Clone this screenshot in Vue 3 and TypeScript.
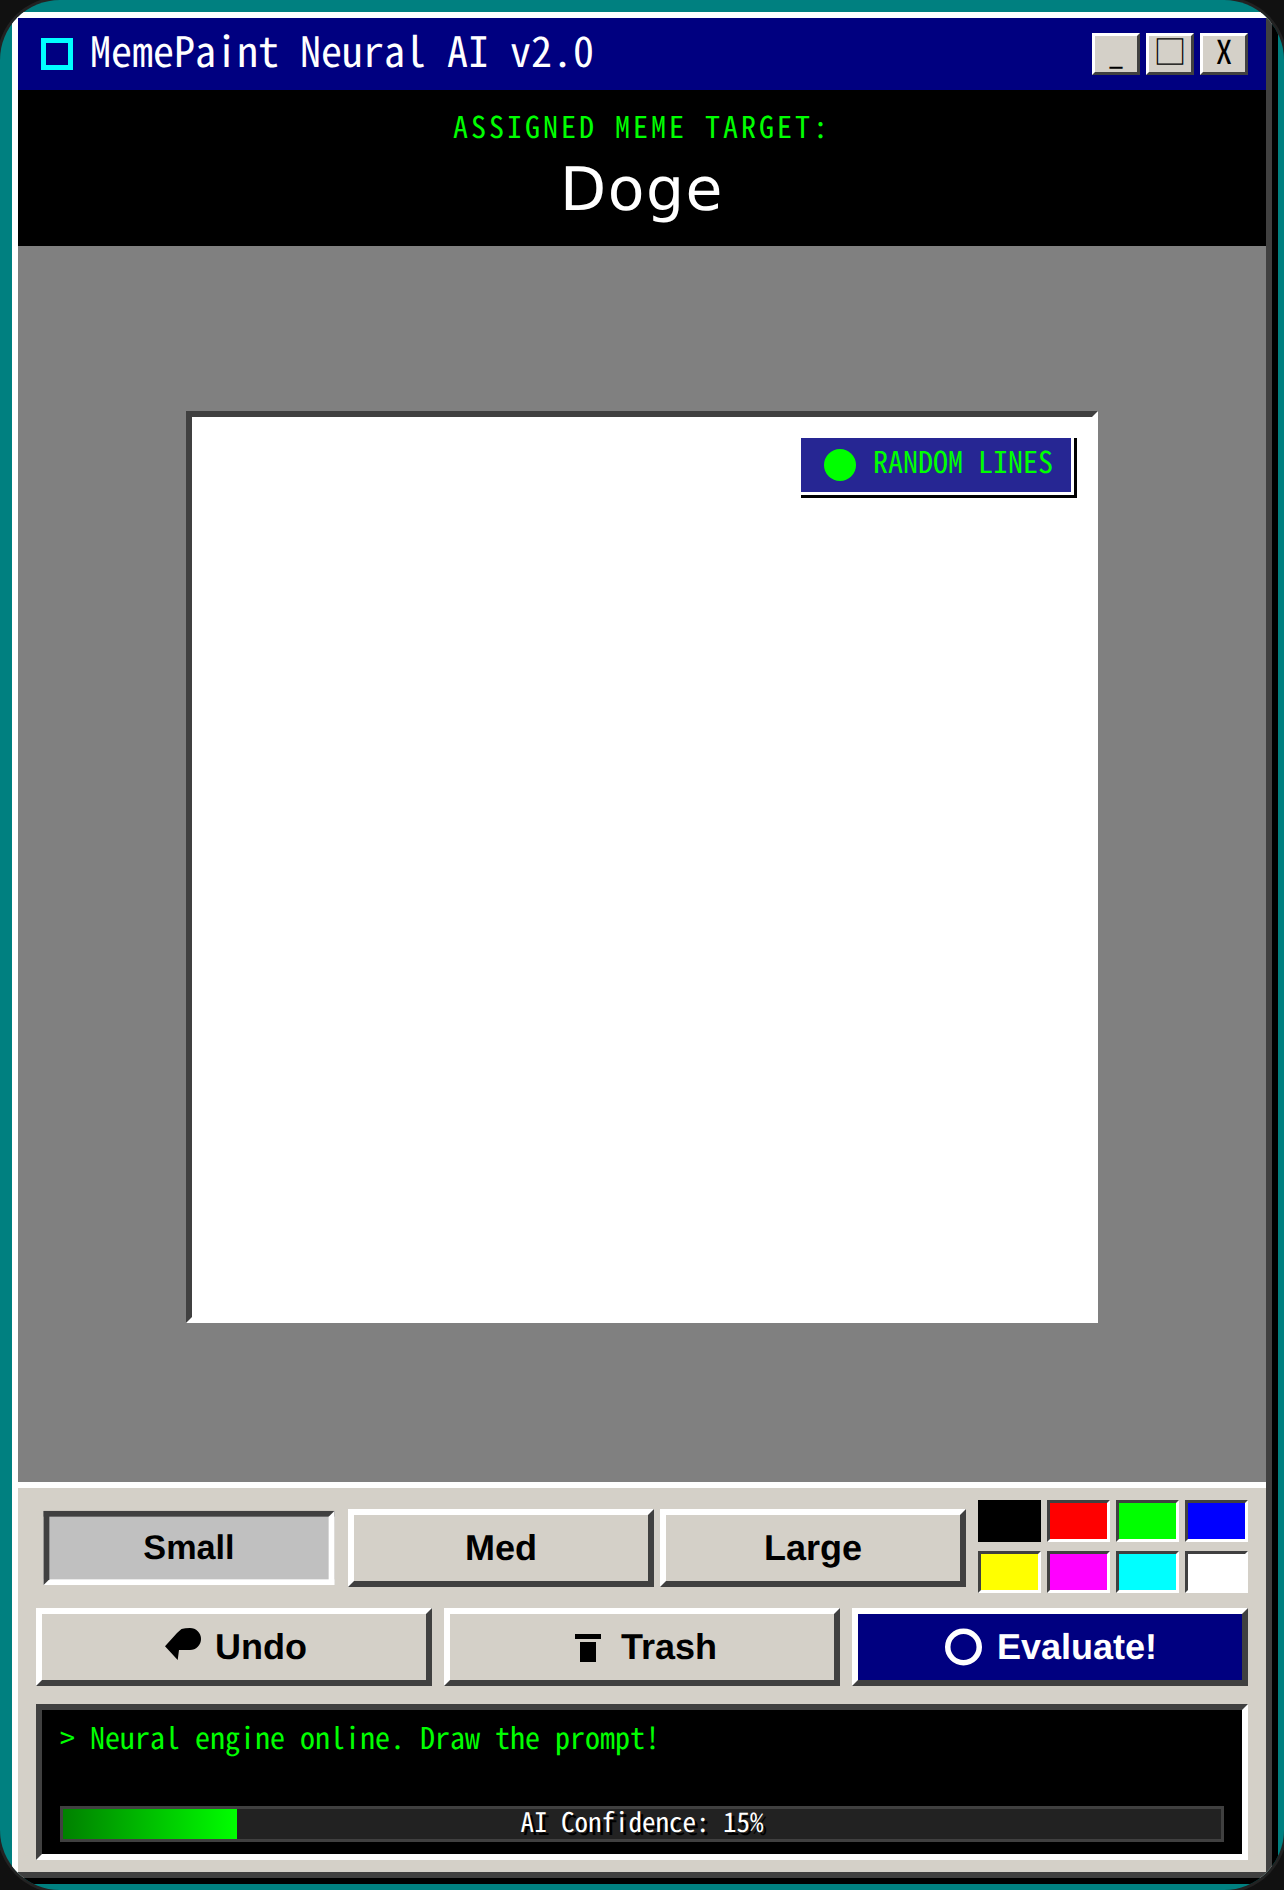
<script setup lang="ts">
import { ref } from 'vue';

const sizes = ['Small', 'Med', 'Large'];
const activeSize = ref('Small');
const colors = ['#000000', '#ff0000', '#00ff00', '#0000ff', '#ffff00', '#ff00ff', '#00ffff', '#ffffff'];
const activeColor = ref('#000000');
const confidence = ref(15);
</script>

<template>
  <div class="frame">
    <div class="window">
      <div class="title-bar">
        <div class="title">
          <span class="title-icon"></span>
          <span class="title-text">MemePaint Neural AI v2.0</span>
        </div>
        <div class="title-buttons">
          <button class="win-btn">_</button>
          <button class="win-btn">□</button>
          <button class="win-btn">X</button>
        </div>
      </div>

      <div class="prompt">
        <div class="prompt-label">ASSIGNED MEME TARGET:</div>
        <div class="prompt-word">Doge</div>
      </div>

      <div class="stage">
        <div class="canvas">
          <div class="badge">
            <span class="badge-dot"></span>
            <span class="badge-text">RANDOM LINES</span>
          </div>
        </div>
      </div>

      <div class="controls">
        <div class="row-top">
          <div class="sizes">
            <button
              v-for="s in sizes"
              :key="s"
              class="btn"
              :class="{ pressed: s === activeSize }"
              @click="activeSize = s"
            >{{ s }}</button>
          </div>
          <div class="swatches">
            <button
              v-for="c in colors"
              :key="c"
              class="swatch"
              :class="{ selected: c === activeColor }"
              :style="{ backgroundColor: c }"
              @click="activeColor = c"
            ></button>
          </div>
        </div>

        <div class="row-actions">
          <button class="btn">
            <svg class="icon" viewBox="0 0 42 42" fill="currentColor">
              <path d="M4 20.3 16 7 20.5 3Q24 2 29 2a11 11 0 0 1 0 22H18L16.7 34Z" />
            </svg>
            Undo
          </button>
          <button class="btn">
            <svg class="icon" viewBox="0 0 42 42" fill="currentColor">
              <rect x="8" y="8" width="26" height="5" />
              <rect x="13" y="16" width="16" height="20" />
            </svg>
            Trash
          </button>
          <button class="btn primary">
            <svg class="icon" viewBox="0 0 42 42" fill="none" stroke="currentColor" stroke-width="5.5">
              <circle cx="20.5" cy="21" r="15.75" />
            </svg>
            Evaluate!
          </button>
        </div>

        <div class="terminal">
          <div class="log">&gt; Neural engine online. Draw the prompt!</div>
          <div class="meter">
            <div class="meter-fill" :style="{ width: confidence + '%' }"></div>
            <div class="meter-label">AI Confidence: {{ confidence }}%</div>
          </div>
        </div>
      </div>
    </div>
  </div>
</template>

<style>
html,
body {
  margin: 0;
  background: #111;
}
</style>

<style scoped>
.frame {
  box-sizing: border-box;
  width: 1284px;
  height: 1890px;
  padding: 12px;
  background: #008080;
  border-radius: 60px;
  overflow: hidden;
  box-shadow: 0 0 0 3px #222;
  text-rendering: geometricPrecision;
}

.window {
  box-sizing: border-box;
  height: 100%;
  display: flex;
  flex-direction: column;
  border: 6px solid;
  border-color: #fff #404040 #404040 #fff;
  background: #d4d0c8;
  box-shadow: 6px 6px 0 #000;
}

button {
  font-family: "Liberation Sans", Arial, sans-serif;
  text-rendering: geometricPrecision;
  cursor: pointer;
  padding: 0;
  margin: 0;
}

.title-bar {
  display: flex;
  justify-content: space-between;
  align-items: center;
  height: 72px;
  padding: 0 18px 0 23px;
  background: #000080;
  color: #fff;
  font-family: "Noto Sans Mono CJK SC", monospace;
  font-size: 42px;
}

.title {
  display: flex;
  align-items: center;
  gap: 17px;
}

.title-text {
  padding-bottom: 10px;
}

.title-icon {
  box-sizing: border-box;
  width: 32px;
  height: 32px;
  border: 5px solid #00ffff;
}

.title-buttons {
  display: flex;
  gap: 6px;
}

.win-btn {
  box-sizing: border-box;
  width: 48px;
  height: 42px;
  display: flex;
  align-items: center;
  justify-content: center;
  padding-bottom: 7px;
  border: 3px solid;
  border-color: #fff #404040 #404040 #fff;
  background: #d4d0c8;
  color: #000;
  font-family: "Noto Sans Mono CJK SC", monospace;
  font-size: 33px;
  line-height: 1;
}

.prompt {
  height: 156px;
  box-sizing: border-box;
  padding-top: 13px;
  background: #000;
  text-align: center;
}

.prompt-label {
  color: #00ff00;
  font-family: "Noto Sans Mono CJK SC", monospace;
  font-size: 30px;
  letter-spacing: 3px;
}

.prompt-word {
  margin-top: 8px;
  color: #fff;
  font-family: "DejaVu Sans", Verdana, sans-serif;
  font-size: 60px;
  letter-spacing: 1.5px;
}

.stage {
  flex: 1;
  display: flex;
  align-items: center;
  justify-content: center;
  padding-top: 6px;
  background: #808080;
}

.canvas {
  position: relative;
  box-sizing: border-box;
  width: 912px;
  height: 912px;
  border: 6px solid;
  border-color: #404040 #fff #fff #404040;
  background: #fff;
}

.badge {
  position: absolute;
  top: 18px;
  right: 18px;
  box-sizing: border-box;
  width: 276px;
  height: 60px;
  display: flex;
  align-items: center;
  gap: 17px;
  padding-left: 23px;
  border: 3px solid #fff;
  background: #262693;
  box-shadow: 3px 3px 0 #000;
  color: #00ff00;
  font-family: "Noto Sans Mono CJK SC", monospace;
  font-size: 30px;
}

.badge-text {
  padding-bottom: 10px;
}

.badge-dot {
  width: 32px;
  height: 32px;
  border-radius: 50%;
  background: #00ff00;
}

.controls {
  display: flex;
  flex-direction: column;
  padding: 12px 18px;
  border-top: 6px solid #fff;
  background: #d4d0c8;
}

.row-top {
  display: flex;
  align-items: center;
  gap: 12px;
  margin-bottom: 15px;
}

.sizes {
  flex: 1;
  display: flex;
  gap: 6px;
  padding-top: 3px;
}

.btn {
  box-sizing: border-box;
  flex: 1;
  height: 78px;
  display: flex;
  align-items: center;
  justify-content: center;
  gap: 12px;
  border: 6px solid;
  border-color: #fff #404040 #404040 #fff;
  background: #d4d0c8;
  color: #000;
  font-size: 36px;
  font-weight: 700;
}

.btn.pressed {
  border-color: #404040 #fff #fff #404040;
  background: #c0c0c0;
  transform: scale(0.95);
}

.btn.primary {
  background: #000080;
  color: #fff;
}

.icon {
  width: 42px;
  height: 42px;
  flex: none;
}

.swatches {
  width: 270px;
  display: grid;
  grid-template-columns: repeat(4, 1fr);
  grid-auto-rows: 42px;
  column-gap: 6px;
  row-gap: 9px;
}

.swatch {
  box-sizing: border-box;
  border: 3px solid;
  border-color: #404040 #fff #fff #404040;
}

.swatch.selected {
  border-color: #000;
}

.row-actions {
  display: flex;
  gap: 12px;
  margin-bottom: 18px;
}

.terminal {
  box-sizing: border-box;
  height: 156px;
  display: flex;
  flex-direction: column;
  justify-content: space-between;
  padding: 4px 18px 12px;
  border: 6px solid;
  border-color: #404040 #fff #fff #404040;
  background: #000;
}

.log {
  color: #00ff00;
  font-family: "Noto Sans Mono CJK SC", monospace;
  font-size: 30px;
}

.meter {
  position: relative;
  box-sizing: border-box;
  height: 36px;
  border: 3px solid #404040;
  background: #222;
}

.meter-fill {
  height: 100%;
  background: linear-gradient(to right, #008000, #00ff00);
}

.meter-label {
  position: absolute;
  inset: 0;
  display: flex;
  align-items: center;
  justify-content: center;
  padding-bottom: 7px;
  color: #fff;
  font-family: "Noto Sans Mono CJK SC", monospace;
  font-size: 27px;
  text-shadow: 3px 3px 0 #000;
}
</style>
